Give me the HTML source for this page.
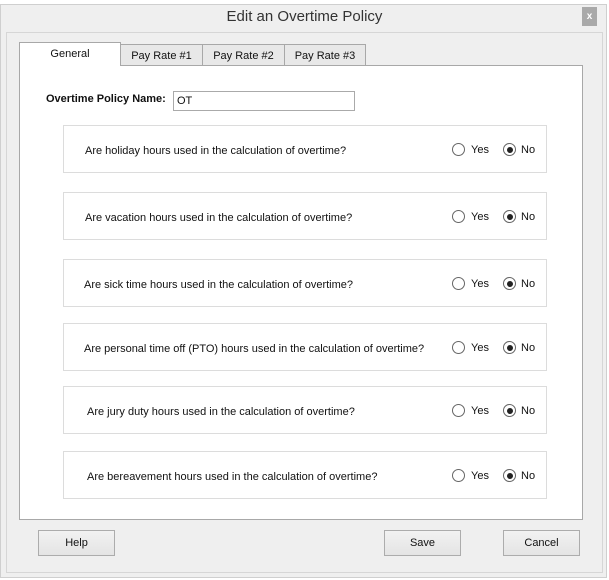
<!DOCTYPE html><html><head><style>
*{margin:0;padding:0;box-sizing:border-box}
body{width:609px;height:580px;background:#fff;font-family:"Liberation Sans","DejaVu Sans",sans-serif;font-size:11px;color:#111;position:relative;overflow:hidden}
.a{position:absolute}
.win{left:0;top:4px;width:607px;height:574px;background:#efefef;border:1px solid #cfcfcf}
.title{left:0;top:8px;width:609px;text-align:center;font-size:15px;color:#333}
.close{left:582px;top:7px;width:15px;height:19px;background:#a9a9a9;color:#fff;font-size:10px;text-align:center;line-height:19px;font-weight:bold}
.panel{left:6px;top:32px;width:597px;height:541px;border:1px solid #d6d6d6;background:#efefef}
.content{left:19px;top:65px;width:564px;height:455px;background:#fff;border:1px solid #a8a8a8}
.tab{top:44px;height:22px;border:1px solid #a8a8a8;background:#e8e8e8;text-align:center;line-height:22px;font-size:11px}
.q{left:63px;width:484px;height:48px;border:1px solid #dcdcdc;background:#fff}
.qt{position:absolute;top:19px;font-size:11px}
.r{position:absolute;top:17px;width:13px;height:13px;border:1px solid #666;border-radius:50%;background:#fff}
.r.on::after{content:"";position:absolute;left:2.5px;top:2.5px;width:6px;height:6px;border-radius:50%;background:#222}
.rl{position:absolute;top:18px;font-size:11px}
.btn{top:530px;width:77px;height:26px;border:1px solid #acacac;background:linear-gradient(#f2f2f2,#e4e4e4);text-align:center;line-height:25px;font-size:11px}
</style></head><body>
<div class="a win"></div>
<div class="a title">Edit an Overtime Policy</div>
<div class="a close">x</div>
<div class="a panel"></div>
<div class="a content"></div>
<div class="a tab" style="left:19px;top:42px;width:102px;height:24px;background:#fff;border-bottom:none;line-height:22px">General</div>
<div class="a tab" style="left:120px;width:83px">Pay Rate #1</div>
<div class="a tab" style="left:202px;width:83px">Pay Rate #2</div>
<div class="a tab" style="left:284px;width:82px">Pay Rate #3</div>
<div class="a" style="left:46px;top:93px;font-weight:bold;font-size:11px">Overtime Policy Name:</div>
<div class="a" style="left:173px;top:91px;width:182px;height:20px;border:1px solid #aaa;background:#fff;padding:3px 3px;font-size:11px">OT</div>

<div class="a q" style="top:125px"><span class="qt" style="left:21px">Are holiday hours used in the calculation of overtime?</span><span class="r" style="left:388px"></span><span class="rl" style="left:407px">Yes</span><span class="r on" style="left:439px"></span><span class="rl" style="left:457px">No</span></div>
<div class="a q" style="top:192px"><span class="qt" style="left:21px">Are vacation hours used in the calculation of overtime?</span><span class="r" style="left:388px"></span><span class="rl" style="left:407px">Yes</span><span class="r on" style="left:439px"></span><span class="rl" style="left:457px">No</span></div>
<div class="a q" style="top:259px"><span class="qt" style="left:20px">Are sick time hours used in the calculation of overtime?</span><span class="r" style="left:388px"></span><span class="rl" style="left:407px">Yes</span><span class="r on" style="left:439px"></span><span class="rl" style="left:457px">No</span></div>
<div class="a q" style="top:323px"><span class="qt" style="left:20px">Are personal time off (PTO) hours used in the calculation of overtime?</span><span class="r" style="left:388px"></span><span class="rl" style="left:407px">Yes</span><span class="r on" style="left:439px"></span><span class="rl" style="left:457px">No</span></div>
<div class="a q" style="top:386px"><span class="qt" style="left:23px">Are jury duty hours used in the calculation of overtime?</span><span class="r" style="left:388px"></span><span class="rl" style="left:407px">Yes</span><span class="r on" style="left:439px"></span><span class="rl" style="left:457px">No</span></div>
<div class="a q" style="top:451px"><span class="qt" style="left:23px">Are bereavement hours used in the calculation of overtime?</span><span class="r" style="left:388px"></span><span class="rl" style="left:407px">Yes</span><span class="r on" style="left:439px"></span><span class="rl" style="left:457px">No</span></div>

<div class="a btn" style="left:38px">Help</div>
<div class="a btn" style="left:384px">Save</div>
<div class="a btn" style="left:503px">Cancel</div>
</body></html>
